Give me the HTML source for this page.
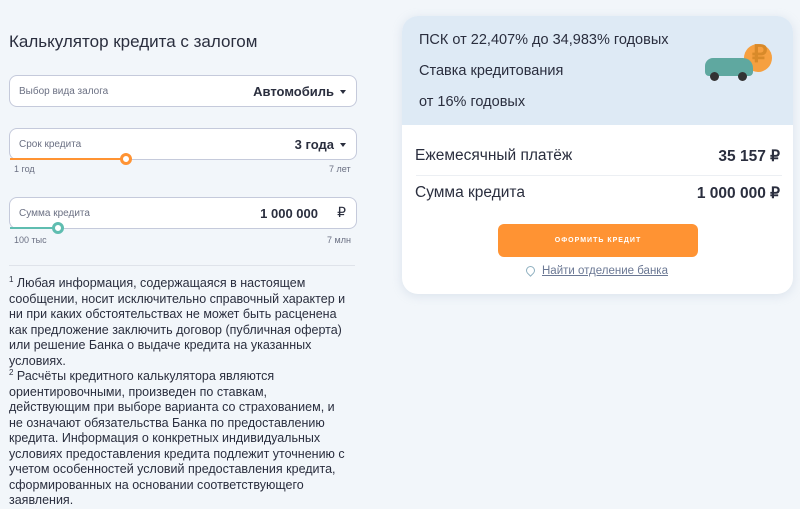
<!DOCTYPE html>
<html><head><meta charset="utf-8"><style>
body{margin:0;width:800px;height:507px;background:#f2f6fa;font-family:"Liberation Sans","Noto Sans CJK SC",sans-serif;color:#2a2e3e;position:relative;overflow:hidden}
.a{position:absolute}
h1{position:absolute;left:9px;top:32px;margin:0;font-size:17px;font-weight:normal;color:#2a2e3e}
.f{position:absolute;left:9px;width:346px;height:30px;background:#fff;border:1px solid #c5cadb;border-radius:8px}
.f .l{position:absolute;left:9px;top:10px;font-size:10px;color:#6b7083}
.f .v{position:absolute;right:22px;top:8px;font-size:13px;font-weight:bold;color:#2a2e3e}
.f .c{position:absolute;right:10px;top:14px;width:0;height:0;border-left:3px solid transparent;border-right:3px solid transparent;border-top:4px solid #2a2e3e}
.s{font-size:9px;color:#6b7083}
.note{position:absolute;left:9px;top:276px;width:338px;font-size:12.5px;line-height:15.5px;color:#2a2e3e}
sup{font-size:8px;line-height:0}
.card{position:absolute;left:402px;top:16px;width:391px;height:278px;background:#fff;border-radius:16px;overflow:hidden;box-shadow:0 2px 10px rgba(150,170,200,.25)}
.top{position:absolute;left:0;top:0;width:100%;height:109px;background:#deeaf5}
.t{position:absolute;font-size:14.5px;color:#2a2e3e}
.r{position:absolute;font-size:15.5px;color:#2a2e3e}
.btn{position:absolute;left:96px;top:208px;width:200px;height:33px;background:#ff9333;border-radius:6px;color:#fff;font-size:7px;font-weight:bold;letter-spacing:1px;text-align:center;line-height:33px}
</style></head><body>
<h1>Калькулятор кредита с залогом</h1>
<div class="f" style="top:75px"><span class="l">Выбор вида залога</span><span class="v">Автомобиль</span><span class="c"></span></div>
<div class="f" style="top:128px"><span class="l">Срок кредита</span><span class="v">3 года</span><span class="c"></span></div>
<div class="a" style="left:10px;top:158px;width:116px;height:2px;background:#ff9333"></div>
<div class="a" style="left:120px;top:153px;width:6px;height:6px;border:3px solid #ff9333;border-radius:50%;background:#fff"></div>
<div class="a s" style="left:14px;top:164px">1 год</div><div class="a s" style="left:329px;top:164px">7 лет</div>
<div class="f" style="top:197px"><span class="l">Сумма кредита</span><span class="v" style="right:38px">1 000 000</span><span class="a" style="right:10px;top:6px;font-size:14px">₽</span></div>
<div class="a" style="left:10px;top:227px;width:48px;height:2px;background:#5fbdb0"></div>
<div class="a" style="left:52px;top:222px;width:6px;height:6px;border:3px solid #5fbdb0;border-radius:50%;background:#fff"></div>
<div class="a s" style="left:14px;top:235px">100 тыс</div><div class="a s" style="left:327px;top:235px">7 млн</div>
<div class="a" style="left:9px;top:265px;width:346px;height:1px;background:#dfe3ea"></div>
<div class="note"><sup>1</sup> Любая информация, содержащаяся в настоящем сообщении, носит исключительно справочный характер и ни при каких обстоятельствах не может быть расценена как предложение заключить договор (публичная оферта) или решение Банка о выдаче кредита на указанных условиях.<br><sup>2</sup> Расчёты кредитного калькулятора являются ориентировочными, произведен по ставкам, действующим при выборе варианта со страхованием, и не означают обязательства Банка по предоставлению кредита. Информация о конкретных индивидуальных условиях предоставления кредита подлежит уточнению с учетом особенностей условий предоставления кредита, сформированных на основании соответствующего заявления.</div>
<div class="card"><div class="top"></div>
<div class="t" style="left:17px;top:16px">ПСК от 22,407% до 34,983% годовых</div>
<div class="t" style="left:17px;top:47px">Ставка кредитования</div>
<div class="t" style="left:17px;top:78px">от 16% годовых</div>
<div class="a" style="left:342px;top:28px;width:28px;height:28px;border-radius:50%;background:#f6a040"></div>
<div class="a" style="left:350px;top:24px;font-size:24px;color:#d88a2a;font-weight:bold">₽</div>
<div class="a" style="left:303px;top:42px;width:48px;height:18px;background:#5fa8a0;border-radius:8px 10px 4px 4px"></div>
<div class="a" style="left:308px;top:56px;width:9px;height:9px;border-radius:50%;background:#333"></div>
<div class="a" style="left:336px;top:56px;width:9px;height:9px;border-radius:50%;background:#333"></div>
<div class="r" style="left:13px;top:131px">Ежемесячный платёж</div>
<div class="r" style="right:13px;top:131px;font-weight:bold">35 157 ₽</div>
<div class="a" style="left:14px;top:159px;width:366px;height:1px;background:#eceff3"></div>
<div class="r" style="left:13px;top:168px">Сумма кредита</div>
<div class="r" style="right:13px;top:168px;font-weight:bold">1 000 000 ₽</div>
<div class="btn">ОФОРМИТЬ КРЕДИТ</div>
<div class="a" style="left:124px;top:250px;width:7px;height:7px;border:1.5px solid #8fb0c0;border-radius:50% 50% 50% 0;transform:rotate(-45deg)"></div>
<div class="a" style="left:140px;top:249px;font-size:11.5px;color:#6b7894;text-decoration:underline">Найти отделение банка</div>
</div>
</body></html>
